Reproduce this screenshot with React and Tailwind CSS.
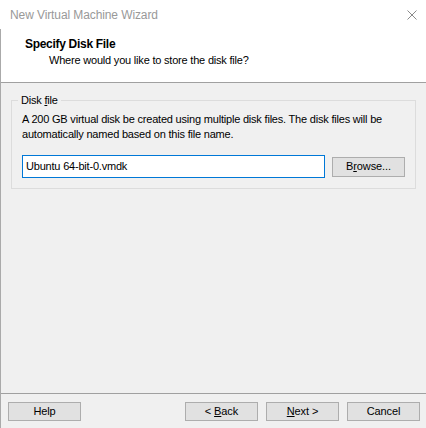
function Btn({ children, className = '' }) {
  return (
    <button
      className={`h-[19px] w-[73px] border border-[#adadad] bg-[#e1e1e1] text-[11px] leading-none tracking-[-0.1px] text-black ${className}`}
    >
      {children}
    </button>
  )
}

export default function App() {
  return (
    <div className="flex h-[428px] w-[426px] flex-col bg-[#f0f0f0] font-['Liberation_Sans',sans-serif] text-[11px] tracking-[-0.2px] text-black">
      {/* title bar + header */}
      <div className="h-[82px] bg-white">
        <div className="flex h-[29px] items-center justify-between pl-[10px] pr-[9px]">
          <span className="text-[12px] tracking-[-0.1px] text-[#999999]">New Virtual Machine Wizard</span>
          <svg width="10" height="10" viewBox="0 0 10 10" className="text-[#8a8a8a]">
            <path d="M0.5 0.5 L9.5 9.5 M9.5 0.5 L0.5 9.5" stroke="currentColor" strokeWidth="1" fill="none" />
          </svg>
        </div>
        <div className="border-l border-[#aaaaaa] pl-[24px] pt-[7px]">
          <p className="text-[12px] font-bold leading-[16px] tracking-[-0.3px]">Specify Disk File</p>
          <p className="pl-[24px] leading-[17px]">Where would you like to store the disk file?</p>
        </div>
        <div className="h-[23px] border-l border-[#aaaaaa]" />
      </div>

      <div className="flex flex-1 flex-col border-l border-[#aaaaaa]">
        <div className="border-t border-[#a0a0a0] px-[10px] pt-[10px]">
          <fieldset className="h-[96px] border border-[#dcdcdc] px-[10px]">
            <legend className="ml-[-4px] px-[3px] leading-[14px]">
              Disk <span className="underline">f</span>ile
            </legend>
            <p className="mt-[5px] leading-[15px]">
              A 200 GB virtual disk be created using multiple disk files. The disk files will be automatically named based on this file name.
            </p>
            <div className="mt-[13px] flex items-center">
              <div className="flex h-[23px] w-[303px] items-center border border-[#0078d7] bg-white px-[3px]">
                Ubuntu 64-bit-0.vmdk
              </div>
              <Btn className="ml-[7px] h-[20px]">
                B<span className="underline">r</span>owse...
              </Btn>
            </div>
          </fieldset>
        </div>

        <div className="flex-1" />

        <div className="flex h-[35px] items-start border-t border-[#a0a0a0] pl-[7px] pt-[8px]">
          <Btn>Help</Btn>
          <div className="flex-1" />
          <Btn>
            &lt; <span className="underline">B</span>ack
          </Btn>
          <Btn className="ml-[8px]">
            <span className="underline">N</span>ext &gt;
          </Btn>
          <Btn className="ml-[8px] mr-[6px]">Cancel</Btn>
        </div>
      </div>
    </div>
  )
}
